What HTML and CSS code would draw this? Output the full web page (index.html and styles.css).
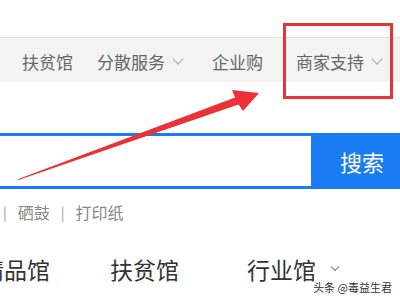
FILE: index.html
```html
<!DOCTYPE html>
<html lang="zh-CN">
<head>
    <meta charset="UTF-8">
    <title>商家支持</title>
    <link rel="stylesheet" href="styles.css">
</head>
<body>
    <div class="page">
        <div class="top-space"></div>

        <!-- Top nav bar -->
        <div class="nav">
            <span class="nav-item">扶贫馆</span>
            <span class="nav-item">分散服务<i class="chev"></i></span>
            <span class="nav-item">企业购</span>
            <span class="nav-sep"></span>
            <span class="nav-item">商家支持<i class="chev"></i></span>
        </div>

        <!-- Search -->
        <div class="search">
            <div class="search-box"></div>
            <button class="search-btn">搜索</button>
        </div>

        <div class="hot">
            <span class="pipe">|</span>
            <span>硒鼓</span>
            <span class="pipe">|</span>
            <span>打印纸</span>
        </div>

        <div class="cats">
            <span class="cat first">精品馆</span>
            <span class="cat">扶贫馆</span>
            <span class="cat">行业馆<i class="chev small"></i></span>
        </div>

        <!-- Annotations -->
        <div class="mark-box"></div>
        <svg class="arrow" width="400" height="300" viewBox="0 0 400 300">
            <polygon points="17,180.5 19,178.8 235,97.5 232,90 259,93 243,111 238.5,104.5" fill="#ea3137"/>
        </svg>

        <div class="watermark">头条 @毒益生君</div>
    </div>
</body>
</html>
```

FILE: styles.css
```css
body {
    margin: 0;
    padding: 0;
    font-family: "Noto Sans CJK SC", "Noto Sans", sans-serif;
    background: #fff;
}

.page {
    position: relative;
    width: 400px;
    height: 300px;
    overflow: hidden;
}

.top-space {
    height: 37px;
}

.nav {
    display: flex;
    align-items: center;
    height: 45px;
    padding: 2px 0 0 22px;
    box-sizing: border-box;
    border-top: 1px solid #e2e2e2;
    background: #f3f3f3;
    font-size: 17px;
    color: #666;
}

.nav-item {
    display: flex;
    align-items: center;
    margin-right: 24px;
    white-space: nowrap;
}

.nav-item:nth-child(2) {
    margin-right: 30px;
}

.nav-item:nth-child(3) {
    margin-right: 18px;
}

.nav-sep {
    width: 1px;
    height: 16px;
    background: #dcdcdc;
    margin-right: 15px;
}

.chev {
    display: inline-block;
    width: 7px;
    height: 7px;
    margin: -5px 0 0 9px;
    border-right: 1px solid #aaa;
    border-bottom: 1px solid #aaa;
    transform: rotate(45deg);
}

.chev.small {
    width: 5px;
    height: 5px;
    margin: -4px 0 0 16px;
    border-color: #777;
}

/* Search row */
.search {
    display: flex;
    height: 56px;
    margin-top: 51px;
}

.search-box {
    flex: 1;
    margin-left: -10px;
    border: 3px solid #1a7cf2;
    border-right: none;
    background: #fff;
}

.search-btn {
    width: 89px;
    border: none;
    background: #1a7cf2;
    color: #fff;
    font-family: inherit;
    font-size: 22px;
    text-align: left;
    padding: 0 0 0 29px;
}

.hot {
    display: flex;
    align-items: center;
    height: 20px;
    margin-top: 13px;
    padding-left: 3px;
    font-size: 16px;
    color: #888;
}

.hot span {
    margin-right: 11px;
}

.hot .pipe {
    color: #999;
    font-size: 14px;
}

.cats {
    display: flex;
    align-items: center;
    height: 30px;
    margin-top: 32px;
    font-size: 23px;
    color: #333;
}

.cat {
    display: flex;
    align-items: center;
    white-space: nowrap;
}

.cat.first {
    margin-left: -19px;
    margin-right: 60px;
}

.cat:nth-child(2) {
    margin-right: 68px;
}

/* Annotations */
.mark-box {
    position: absolute;
    left: 283px;
    top: 23px;
    width: 104px;
    height: 70px;
    border: 3px solid #e8333a;
}

.arrow {
    position: absolute;
    left: 0;
    top: 0;
}

.watermark {
    position: absolute;
    right: 8px;
    bottom: 5px;
    font-size: 11px;
    color: #333;
    text-shadow: 0 0 2px #fff;
}
```
